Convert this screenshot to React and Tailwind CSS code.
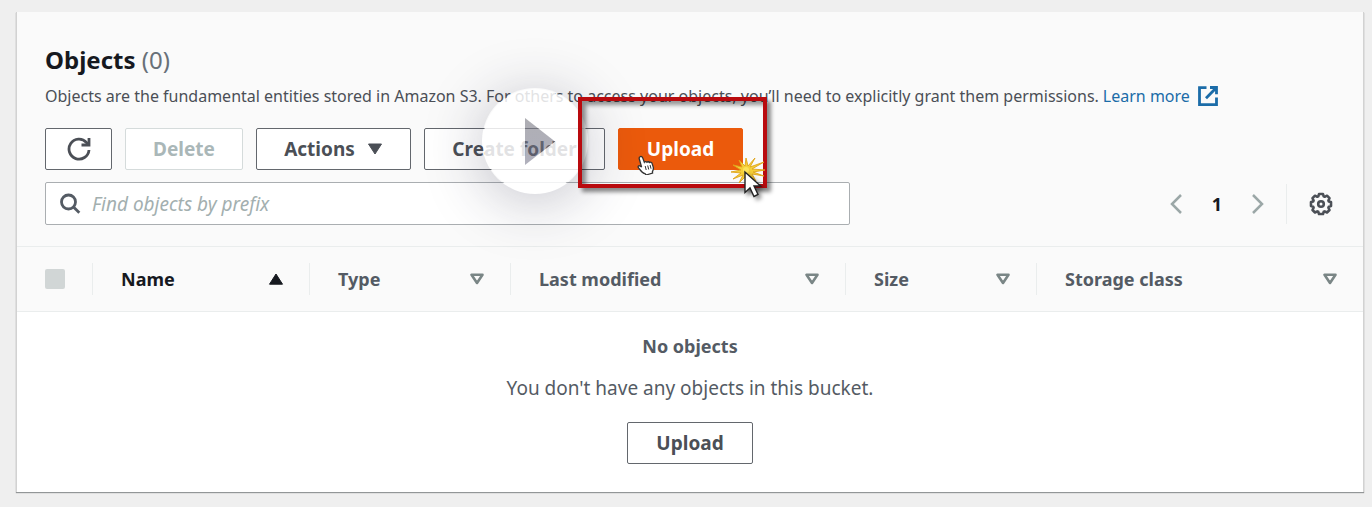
import React from "react";

const columns = [
  { label: "Name", width: "w-[217px]", sorted: true },
  { label: "Type", width: "w-[201px]" },
  { label: "Last modified", width: "w-[335px]" },
  { label: "Size", width: "w-[191px]" },
  { label: "Storage class", width: "" },
];

const buttonBase =
  "flex h-[42px] items-center justify-center rounded-xs border text-[19px] font-bold whitespace-nowrap";
const normalButton = "border-[#63676d] bg-white text-[#4b4f56]";

function RefreshIcon() {
  return (
    <svg className="size-6 shrink-0" viewBox="0 0 24 24" fill="none" stroke="#4b4f56" strokeWidth="2.8" aria-hidden="true">
      <path d="M22 13A10 10 0 1 1 19.500 5.500L22 8" />
      <path d="M22 1v7h-7.500" />
    </svg>
  );
}

function SearchIcon() {
  return (
    <svg className="size-6 shrink-0" viewBox="0 0 24 24" fill="none" stroke="#545b64" strokeWidth="2.8" aria-hidden="true">
      <circle cx="10.500" cy="10" r="7" />
      <path d="M15.500 15l5.800 5.800" />
    </svg>
  );
}

function ExternalIcon() {
  return (
    <svg className="size-5" viewBox="0 0 20 20" fill="none" stroke="#1b6ca8" strokeWidth="2.800" aria-hidden="true">
      <path d="M8.500 1.600H1.500v17h17v-7" />
      <path d="M12 1.500h6.500v6.700M18 2L8 12.200" />
    </svg>
  );
}

function Chevron({ d }) {
  return (
    <svg className="h-5 w-3" viewBox="0 0 12 20" fill="none" stroke="#9ba7a7" strokeWidth="2.500" aria-hidden="true">
      <path d={d} />
    </svg>
  );
}

function GearIcon() {
  return (
    <svg className="size-6" viewBox="0 0 24 24" fill="none" stroke="#4b4f56" strokeWidth="2.600" strokeLinejoin="round" aria-hidden="true">
      <path d="M10 2h4l.7 2.400 1 .4 2.300-1.100 2.500 2.500-1.100 2.300.4 1L22 10v4l-2.200.7-.4 1 1.100 2.300-2.500 2.500-2.300-1.100-1 .4L14 22h-4l-.7-2.200-1-.4-2.300 1.100L3.500 18l1.100-2.300-.4-1L2 14v-4l2.200-.5.4-1L3.500 6.200 6 3.700l2.300 1.100 1-.4z" />
      <circle cx="12" cy="12" r="2.800" />
    </svg>
  );
}

function SortIcon({ sorted }) {
  return (
    <svg className="h-3 w-4 shrink-0" viewBox="0 0 16 12" aria-hidden="true">
      {sorted ? (
        <path d="M8 1L14.500 11.200H1.500z" fill="#16191f" stroke="#16191f" strokeLinejoin="round" />
      ) : (
        <path d="M2.500 1.800h11L8 10z" fill="none" stroke="#7a8686" strokeWidth="2.600" strokeLinejoin="round" />
      )}
    </svg>
  );
}

function PlayOverlay() {
  return (
    <button
      type="button"
      aria-label="Play video"
      className="absolute -top-10 left-[58px] z-10 size-[106px] rounded-full shadow-[0_8px_60px_rgba(35,35,65,0.28)]"
    >
      <svg className="size-full" viewBox="0 0 106 106" aria-hidden="true">
        <defs>
          <linearGradient id="play-shade" x1="0" y1="0" x2="0" y2="1">
            <stop offset="0" stopColor="#85858d" stopOpacity="0.65" />
            <stop offset="1" stopColor="#62627a" stopOpacity="0.5" />
          </linearGradient>
        </defs>
        <path
          d="M53 1a52 52 0 1 1 0 104a52 52 0 1 1 0-104zM43 30v47l30-23.500z"
          fill="#fff"
          fillOpacity="0.84"
          fillRule="evenodd"
        />
        <path d="M43 30v47l30-23.500z" fill="url(#play-shade)" />
      </svg>
    </button>
  );
}

function HandCursor() {
  return (
    <svg className="pointer-events-none absolute top-[27px] left-[19px] h-5 w-[18px]" viewBox="0 0 18 20" aria-hidden="true">
      <path
        d="M3 1.800c1.200-.8 2.300 0 2.700 1.100l1.600 4.300c.5-.9 2-.9 2.600 0 .8-.8 2-.5 2.600.3 1-.7 2.300-.2 2.600.9l1.200 3.900c.4 1.800-.3 3.200-.9 4.500l.2 1.200-6.600 2-1-1.300c-2-.3-3.900-2.500-5.600-4.700-.9-1.200-1.800-1.900-1.100-2.800.7-.9 2.200-.4 3.300.9L2.300 4c-.3-1 0-1.800.7-2.200z"
        fill="#fff"
        stroke="#333"
        strokeWidth="1.300"
      />
      <path d="M8.200 11l1 4M10.700 10.500l1 4M13.100 10l.9 3.700" stroke="#333" />
    </svg>
  );
}

function ClickCursor() {
  return (
    <svg className="absolute -right-1 -bottom-5 h-14 w-10 overflow-visible" viewBox="0 0 40 56" aria-hidden="true">
      <polygon
        points="38,22 25,21 37,14 23,19 28,10 21,18 19,10 18,18 12,12 15,19 6,17 14,22 4,24 14,25 6,31 16,27 12,35 18,29 20,36 22,28 29,33 25,26 37,28 26,24"
        fill="#f5cf38"
        stroke="#dfa41a"
        strokeWidth="0.900"
      />
      <circle cx="19" cy="22" r="3" fill="#fbe25a" />
      <path
        d="M18 24v20.500l5-4.500 4 8.500 4-2-4-8.500h6.500z"
        fill="#fff"
        stroke="#222"
        strokeWidth="1.400"
        className="drop-shadow-[3px_3px_2px_rgba(0,0,0,0.45)]"
      />
    </svg>
  );
}

export default function App() {
  return (
    <main className="min-h-screen bg-[#efefef] pt-3 pr-2 pb-4 pl-4 font-['Noto_Sans','Open_Sans',sans-serif] text-[#545b64]">
      <section className="border-x border-[#d2d2d2] bg-white shadow-[0_1px_1px_#929697]">
        <header className="border-b border-[#eaeded] bg-[#fafafa] pt-8 pr-[30px] pb-[21px] pl-7">
          <h1 className="text-2xl font-bold text-[#16191f]">
            Objects <span className="font-normal text-[#687078]">(0)</span>
          </h1>
          <p className="mt-2 flex items-center text-base leading-6 whitespace-nowrap text-[#4b4f56]">
            Objects are the fundamental entities stored in Amazon S3. For others to access your objects, you’ll need to
            explicitly grant them permissions.
            <a href="#learn-more" className="ml-1 flex items-center gap-2 text-[#1b6ca8]">
              Learn more
              <ExternalIcon />
            </a>
          </p>
          <div className="mt-5 flex gap-[13px]">
            <button type="button" aria-label="Refresh" className={`${buttonBase} ${normalButton} w-[67px]`}>
              <RefreshIcon />
            </button>
            <button type="button" disabled className={`${buttonBase} w-[118px] border-[#d5dbdb] bg-white text-[#aab7b8]`}>
              Delete
            </button>
            <button type="button" className={`${buttonBase} ${normalButton} w-[155px] gap-3`}>
              Actions
              <svg className="h-3 w-4" viewBox="0 0 16 12" aria-hidden="true">
                <path d="M1.500 1h13L8 11z" fill="#4b4f56" stroke="#4b4f56" strokeLinejoin="round" />
              </svg>
            </button>
            <div className="relative">
              <button type="button" className={`${buttonBase} ${normalButton} w-[181px]`}>
                Create folder
              </button>
              <PlayOverlay />
            </div>
            <div className="relative">
              <button type="button" className={`${buttonBase} w-[125px] border-[#eb5a0c] bg-[#eb5a0c] text-white`}>
                Upload
              </button>
              <HandCursor />
              <div className="pointer-events-none absolute -top-[31px] -right-6 -bottom-[18px] -left-10 z-20 border-4 border-[#b90a0e] shadow-[4px_4px_4px_rgba(0,0,0,0.45),inset_4px_4px_4px_rgba(0,0,0,0.4)]">
                <ClickCursor />
              </div>
            </div>
          </div>
          <div className="mt-3 flex items-center justify-between">
            <label className="flex h-[43px] w-[805px] items-center gap-[10px] rounded-xs border border-[#aaaeb1] bg-white px-3">
              <SearchIcon />
              <input
                type="text"
                aria-label="Find objects by prefix"
                placeholder="Find objects by prefix"
                className="w-full bg-transparent text-[19px] leading-8 outline-none placeholder:text-[#a3afaf] placeholder:italic"
              />
            </label>
            <nav aria-label="Pagination" className="flex items-center">
              <button type="button" aria-label="Previous page">
                <Chevron d="M11 1L2 10l9 9" />
              </button>
              <span className="w-[70px] text-center text-lg font-bold text-[#16191f]">1</span>
              <button type="button" aria-label="Next page">
                <Chevron d="M1 1l9 9-9 9" />
              </button>
              <span className="mx-[22px] h-10 w-px bg-[#eaeded]" />
              <button type="button" aria-label="Preferences">
                <GearIcon />
              </button>
            </nav>
          </div>
        </header>
        <table className="w-full table-fixed border-collapse">
          <thead>
            <tr className="h-16 border-b border-[#eaeded] bg-[#fafafa]">
              <th className="w-[75px] p-0">
                <input
                  type="checkbox"
                  disabled
                  aria-label="Select all objects"
                  className="ml-7 block size-5 appearance-none rounded-xs bg-[#d1d6d6]"
                />
              </th>
              {columns.map((column) => (
                <th key={column.label} scope="col" className={`${column.width} p-0`}>
                  <button
                    type="button"
                    className={`flex h-8 w-full items-center justify-between border-l border-[#eaeded] pr-[25px] pl-7 text-lg font-bold ${column.sorted ? "text-[#16191f]" : "text-[#545b64]"}`}
                  >
                    {column.label}
                    <SortIcon sorted={column.sorted} />
                  </button>
                </th>
              ))}
            </tr>
          </thead>
          <tbody>
            <tr>
              <td colSpan={6} className="px-7 pt-5 pb-7 text-center leading-7">
                <p className="text-lg leading-7 font-bold">No objects</p>
                <p className="mt-[14px] text-[19px]">You don't have any objects in this bucket.</p>
                <button type="button" className={`${buttonBase} ${normalButton} mx-auto mt-5 w-[126px]`}>
                  Upload
                </button>
              </td>
            </tr>
          </tbody>
        </table>
      </section>
    </main>
  );
}
